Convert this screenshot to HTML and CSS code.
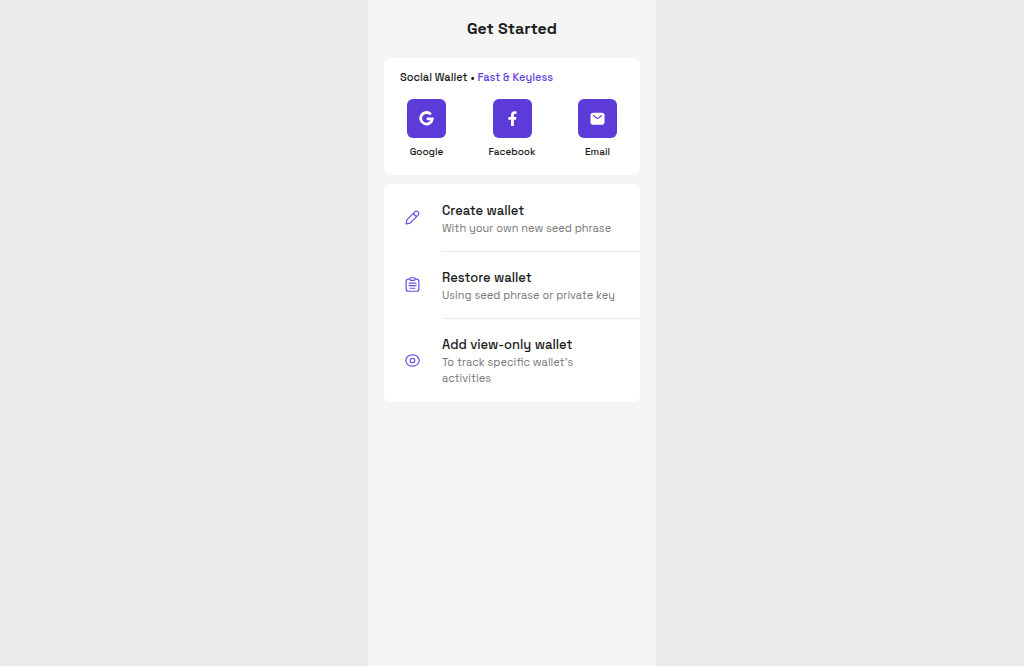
FILE: index.html
```html
<!DOCTYPE html>
<html lang="en">
<head>
<meta charset="utf-8">
<meta name="viewport" content="width=device-width, initial-scale=1">
<title>Get Started</title>
<link rel="stylesheet" href="styles.css">
</head>
<body>
<main class="panel">
  <h1 class="title">Get Started</h1>
  <section class="card social">
    <h2 class="social-title">Social Wallet • <span class="accent">Fast &amp; Keyless</span></h2>
    <div class="providers">
      <button class="provider" type="button">
        <span class="tile"><svg width="15" height="15" viewBox="0 0 16 16" fill="none" stroke="#fff" stroke-width="3"><path d="M12.600 3.600A6.200 6.200 0 1 0 14.200 8.300H8.200"/></svg></span>
        <span class="provider-name">Google</span>
      </button>
      <button class="provider" type="button">
        <span class="tile"><svg width="15" height="15" viewBox="0 0 16 16" fill="#fff"><path d="M6.400 16V9.300H3.500V6.300h2.900V4.400C6.400 1.700 7.800.2 10.200.2c1.100 0 2.100.2 2.100.2v2.500H11c-1.200 0-1.500.7-1.500 1.500v1.900h2.700l-.5 3H9.500V16z"/></svg></span>
        <span class="provider-name">Facebook</span>
      </button>
      <button class="provider" type="button">
        <span class="tile"><svg width="15" height="15" viewBox="0 0 16 16"><rect x=".5" y="1.800" width="15" height="12.800" rx="3" fill="#fff"/><path d="M3.800 5 7 7.500q1 .7 2 0L12.200 5" fill="none" stroke="#5d3bd8" stroke-width="1.200" stroke-linecap="round"/></svg></span>
        <span class="provider-name">Email</span>
      </button>
    </div>
  </section>
  <section class="card options">
    <button class="option" type="button">
      <svg class="option-icon" width="15" height="15" viewBox="0 0 16 16"><path d="M1.200 14.800 2 10.500 10.500 2a2.450 2.450 0 0 1 3.500 3.500L5.500 14zM9.200 3.400q.5 2.900 3.400 3.400"/></svg>
      <span class="option-text"><span class="option-name">Create wallet</span><span class="option-note">With your own new seed phrase</span></span>
    </button>
    <button class="option" type="button">
      <svg class="option-icon" width="15" height="15" viewBox="0 0 16 16"><path d="M5.200 2.200H3.700A2.500 2.500 0 0 0 1.200 4.700V12.700A2.500 2.500 0 0 0 3.700 15.200H12.300A2.500 2.500 0 0 0 14.800 12.700V4.700A2.500 2.500 0 0 0 12.300 2.200H10.800M6.300.8h3.400a1.100 1.100 0 0 1 1.100 1.100v.5a1.100 1.100 0 0 1-1.100 1.100H6.300a1.100 1.100 0 0 1-1.100-1.100v-.5A1.100 1.100 0 0 1 6.300.8zM4.300 6.500h7.400M4.300 9.200h7.400M5.500 12h5"/></svg>
      <span class="option-text"><span class="option-name">Restore wallet</span><span class="option-note">Using seed phrase or private key</span></span>
    </button>
    <button class="option" type="button">
      <svg class="option-icon" width="15" height="15" viewBox="0 0 16 16"><path d="M.7 8C1.400 4.200 4.600 2 8 2S14.600 4.200 15.300 8C14.600 11.800 11.400 14 8 14S1.400 11.800.7 8z"/><circle cx="8" cy="8" r="2.400"/></svg>
      <span class="option-text"><span class="option-name">Add view-only wallet</span><span class="option-note">To track specific wallet’s activities</span></span>
    </button>
  </section>
</main>
</body>
</html>
```
FILE: styles.css
```css
* { box-sizing: border-box; }
body {
  margin: 0;
  background: #ebebeb;
  color: #1b1b1b;
  font-family: "Space Grotesk", Inter, "Liberation Sans", sans-serif;
}
button {
  margin: 0;
  padding: 0;
  border: 0;
  background: none;
  color: inherit;
  font: inherit;
  cursor: pointer;
}
.panel {
  width: 100%;
  max-width: 288px;
  min-height: 100vh;
  margin: 0 auto;
  padding: 0 16px 16px;
  background: #f5f5f5;
}
.title {
  margin: 0;
  padding: 17px 0;
  font-size: 16px;
  line-height: 24px;
  font-weight: 700;
  text-align: center;
}
.card {
  background: #fff;
  border-radius: 7px;
  overflow: hidden;
}
.social {
  margin-bottom: 9px;
  padding: 11px 16px 15px;
}
.social-title {
  margin: 0 0 14px;
  font-size: 11px;
  line-height: 16px;
  font-weight: 500;
}
.accent { color: #6442db; }
.providers {
  display: flex;
  justify-content: space-between;
}
.provider {
  display: flex;
  flex-direction: column;
  align-items: center;
  width: 53px;
  gap: 6px;
}
.tile {
  display: flex;
  align-items: center;
  justify-content: center;
  width: 39px;
  height: 39px;
  border-radius: 6px;
  background: #5d3bd8;
}
.provider-name {
  font-size: 10px;
  line-height: 16px;
  font-weight: 500;
}
.option {
  display: flex;
  align-items: center;
  width: 100%;
  padding-left: 21px;
  gap: 22px;
  text-align: left;
}
.option-icon {
  flex: none;
  fill: none;
  stroke: #6e4ce5;
  stroke-width: 1.3;
  stroke-linejoin: round;
  stroke-linecap: round;
}
.option-text {
  flex: 1;
  padding: 18px 16px 15px 0;
}
.option + .option .option-text {
  padding-top: 17px;
  border-top: 1px solid #ebebeb;
}
.option:last-child .option-text { padding-bottom: 16px; }
.option-name,
.option-note { display: block; }
.option-name {
  font-size: 13px;
  line-height: 18px;
  font-weight: 500;
}
.option-note {
  color: #777;
  font-size: 11px;
  line-height: 16px;
}
```
